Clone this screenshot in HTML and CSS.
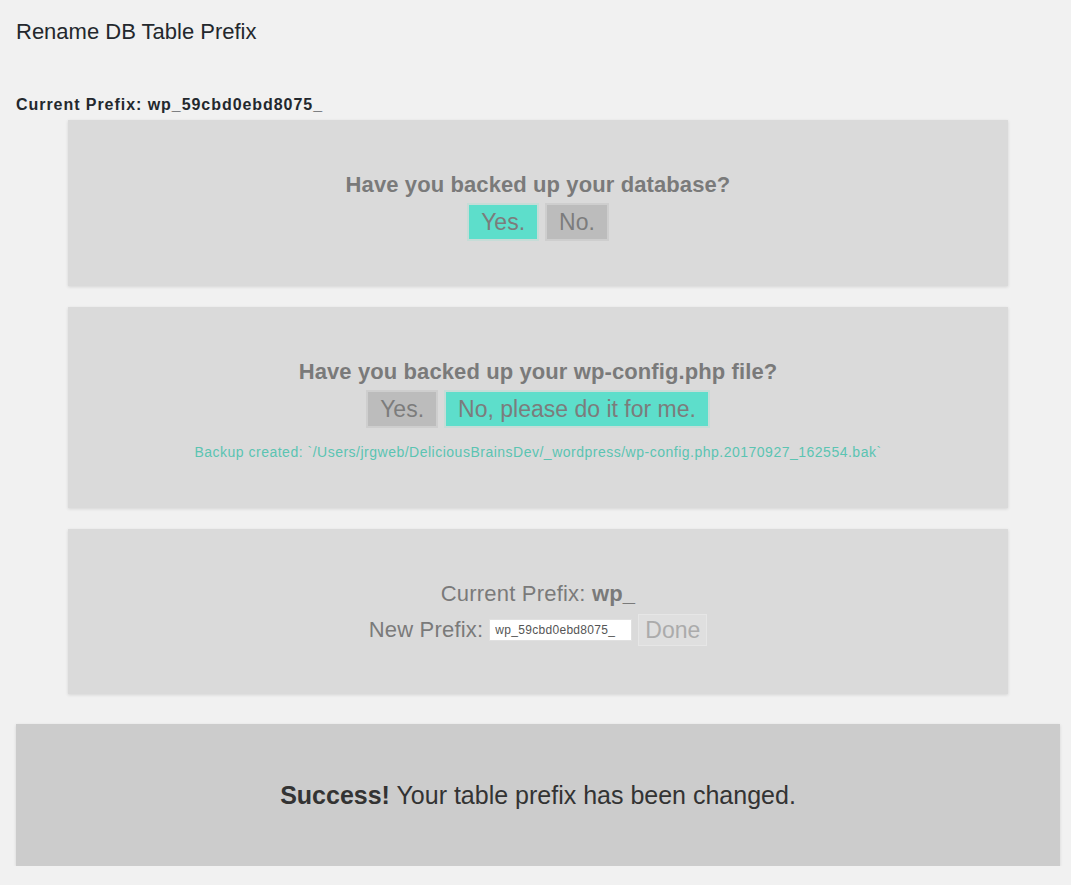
FILE: index.html
```html
<!DOCTYPE html>
<html>
<head>
<meta charset="utf-8">
<link rel="stylesheet" href="styles.css">
</head>
<body>
<div class="wrap">
  <h1 class="title">Rename DB Table Prefix</h1>
  <p class="current">Current Prefix: wp_59cbd0ebd8075_</p>
  <div class="steps">
    <section class="panel p1">
      <h3 class="question">Have you backed up your database?</h3>
      <div class="buttons">
        <button class="btn active">Yes.</button>
        <button class="btn">No.</button>
      </div>
    </section>
    <section class="panel p2">
      <h3 class="question">Have you backed up your wp-config.php file?</h3>
      <div class="buttons">
        <button class="btn">Yes.</button>
        <button class="btn active">No, please do it for me.</button>
      </div>
      <p class="backup">Backup created: `/Users/jrgweb/DeliciousBrainsDev/_wordpress/wp-config.php.20170927_162554.bak`</p>
    </section>
    <section class="panel p3">
      <p class="line">Current Prefix: <b>wp_</b></p>
      <div class="line newrow">
        <span>New Prefix:</span>
        <input class="prefix-input" type="text" value="wp_59cbd0ebd8075_">
        <button class="done">Done</button>
      </div>
    </section>
  </div>
  <div class="success"><p><b>Success!</b> Your table prefix has been changed.</p></div>
</div>
</body>
</html>
```

FILE: styles.css
```css
html, body {
  margin: 0;
  padding: 0;
  background: #f1f1f1;
}
body {
  font-family: "Liberation Sans", Arial, sans-serif;
  color: #23282d;
}
.wrap {
  padding: 0 11px 0 16px;
}
.title {
  margin: 0;
  padding-top: 19px;
  font-size: 22px;
  font-weight: 400;
  line-height: 26px;
  color: #23282d;
}
.current {
  margin: 0;
  padding-top: 50px;
  font-size: 16px;
  font-weight: 700;
  letter-spacing: 0.95px;
  line-height: 20px;
  color: #23282d;
}
.steps {
  display: flex;
  flex-direction: column;
  gap: 21px;
  margin: 5px 52px 0 52px;
}
.panel {
  background: #dadada;
  box-shadow: 0 1px 3px rgba(0,0,0,0.12);
  text-align: center;
  color: #7a7a7a;
  display: flex;
  flex-direction: column;
  align-items: center;
}
.p1 { padding: 53px 0 45px; }
.p2 { padding: 53px 0 46px; }
.p3 { padding: 52px 0 48px; }
.question {
  margin: 0;
  font-size: 22px;
  font-weight: 700;
  letter-spacing: 0.1px;
  line-height: 24px;
  color: #7a7a7a;
}
.buttons {
  display: flex;
  gap: 6px;
  margin-top: 6px;
}
.btn {
  font-family: "Liberation Sans", Arial, sans-serif;
  font-size: 23px;
  line-height: 34px;
  height: 38px;
  padding: 0 12px;
  color: #7c7c7c;
  background: #bcbcbc;
  border: 2px solid #cecece;
  margin: 0;
}
.btn.active {
  background: #5ddecb;
  border-color: #c6dcd7;
}
.backup {
  margin: 14px 0 0;
  font-size: 14px;
  letter-spacing: 0.5px;
  line-height: 20px;
  color: #5bc4b2;
}
.line {
  margin: 0;
  font-size: 22px;
  letter-spacing: 0.2px;
  line-height: 26px;
  color: #7a7a7a;
}
.line b { font-weight: 700; }
.newrow {
  display: flex;
  align-items: center;
  gap: 6px;
  margin-top: 7px;
}
.prefix-input {
  font-family: "Liberation Sans", Arial, sans-serif;
  font-size: 12px;
  letter-spacing: 0.3px;
  width: 143px;
  height: 22px;
  padding: 0 5px;
  border: 1px solid #e0e0e0;
  background: #fff;
  color: #555;
  box-sizing: border-box;
  margin: 0;
}
.done {
  font-family: "Liberation Sans", Arial, sans-serif;
  font-size: 23px;
  height: 32px;
  line-height: 28px;
  padding: 0 6px;
  color: #ababab;
  background: #dfdfdf;
  border: 1px solid #e6e6e6;
  margin: 0;
}
.success {
  margin-top: 30px;
  height: 142px;
  background: #cccccc;
  box-shadow: 0 1px 3px rgba(0,0,0,0.12);
  display: flex;
  align-items: center;
  justify-content: center;
}
.success p {
  margin: 0;
  font-size: 25px;
  color: #333;
}
```
